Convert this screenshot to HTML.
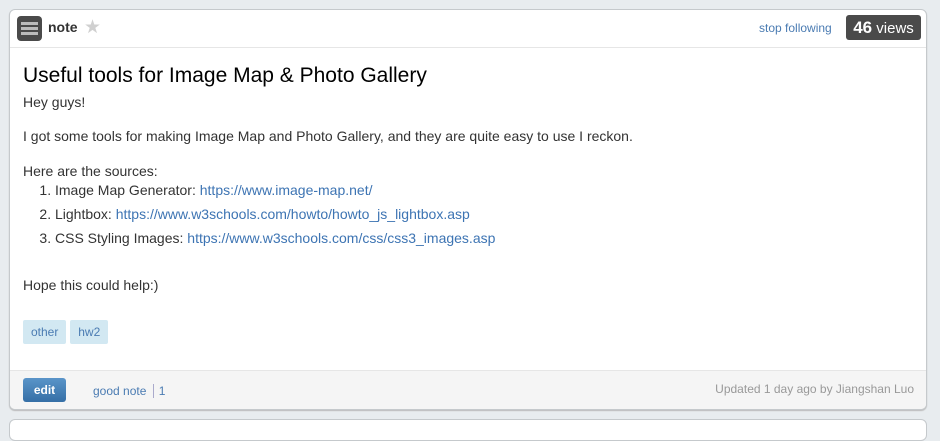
<!DOCTYPE html>
<html><head><style>
body{margin:0;width:940px;height:425px;background:#e8ecef;font-family:"Liberation Sans",sans-serif;position:relative;overflow:hidden}
.card{position:absolute;left:9px;top:9px;width:916px;height:399px;background:#fff;border:1px solid #c5c9cc;border-radius:6px;box-shadow:0 1px 1px #bbb;overflow:hidden}
.card2{position:absolute;left:9px;top:419px;width:916px;height:20px;background:#fff;border:1px solid #c5c9cc;border-radius:6px}
.hdr{height:37px;border-bottom:1px solid #e6e6e6;position:relative}
.menu{position:absolute;left:7px;top:6px;width:25px;height:25px;background:#4a4a4a;border-radius:4px}
.menu i{position:absolute;left:4px;width:17px;height:3px;background:#bbb}
.note{position:absolute;left:38px;top:9px;font-weight:bold;font-size:14px;color:#333}
.star{position:absolute;left:74px;top:6px;color:#d0d0d0;font-size:19px}
.sf{position:absolute;left:749px;top:11px;font-size:12px;color:#4a7bb2}
.views{position:absolute;left:836px;top:5px;width:75px;height:25px;background:#4a4a4a;border-radius:3px;color:#fff;font-size:15px;line-height:25px;text-align:center}
.views b{font-size:17px}
.body{padding:0 13px;font-size:14px;color:#333;line-height:20px}
h1{font-weight:normal;font-size:21px;margin:16px 0 4px;color:#000;line-height:24px}
p{margin:0}
a{color:#3d74b3;text-decoration:none}
ol{margin:-1px 0 0;padding-left:32px}
ol li{height:24px;line-height:20px}
.tag{display:inline-block;background:#d2e8f2;color:#4a7bb2;font-size:12px;padding:0 8px;height:24px;line-height:24px;border-radius:2px}
.ftr{position:absolute;left:0;right:0;bottom:0;height:38px;background:#f5f5f5;border-top:1px solid #e6e6e6}
.edit{position:absolute;left:13px;top:7px;width:43px;height:24px;background:linear-gradient(#5a95c9,#356fa6);border-radius:3px;color:#fff;font-weight:bold;font-size:12px;text-align:center;line-height:24px}
.gn{position:absolute;left:83px;top:13px;font-size:12px;color:#4a7bb2}
.upd{position:absolute;right:12px;top:11px;font-size:12px;color:#999}
</style></head><body>
<div class="card">
<div class="hdr">
<div class="menu"><i style="top:6px"></i><i style="top:11px"></i><i style="top:16px"></i></div>
<div class="note">note</div><div class="star">★</div>
<div class="sf">stop following</div>
<div class="views"><b>46</b> views</div>
</div>
<div class="body">
<h1>Useful tools for Image Map &amp; Photo Gallery</h1>
<p style="margin-bottom:14px">Hey guys!</p>
<p style="margin-bottom:15px">I got some tools for making Image Map and Photo Gallery, and they are quite easy to use I reckon.</p>
<p>Here are the sources:</p>
<ol>
<li>Image Map Generator: <a>https://www.image-map.net/</a></li>
<li>Lightbox: <a>https://www.w3schools.com/howto/howto_js_lightbox.asp</a></li>
<li>CSS Styling Images: <a>https://www.w3schools.com/css/css3_images.asp</a></li>
</ol>
<p style="margin-top:23px">Hope this could help:)</p>
<div style="margin-top:24px;line-height:24px"><span class="tag">other</span> <span class="tag">hw2</span></div>
</div>
<div class="ftr">
<div class="edit">edit</div>
<div class="gn">good note <span style="border-left:1px solid #aac;padding-left:5px;margin-left:3px">1</span></div>
<div class="upd">Updated 1 day ago by Jiangshan Luo</div>
</div>
</div>
<div class="card2"></div>
</body></html>
